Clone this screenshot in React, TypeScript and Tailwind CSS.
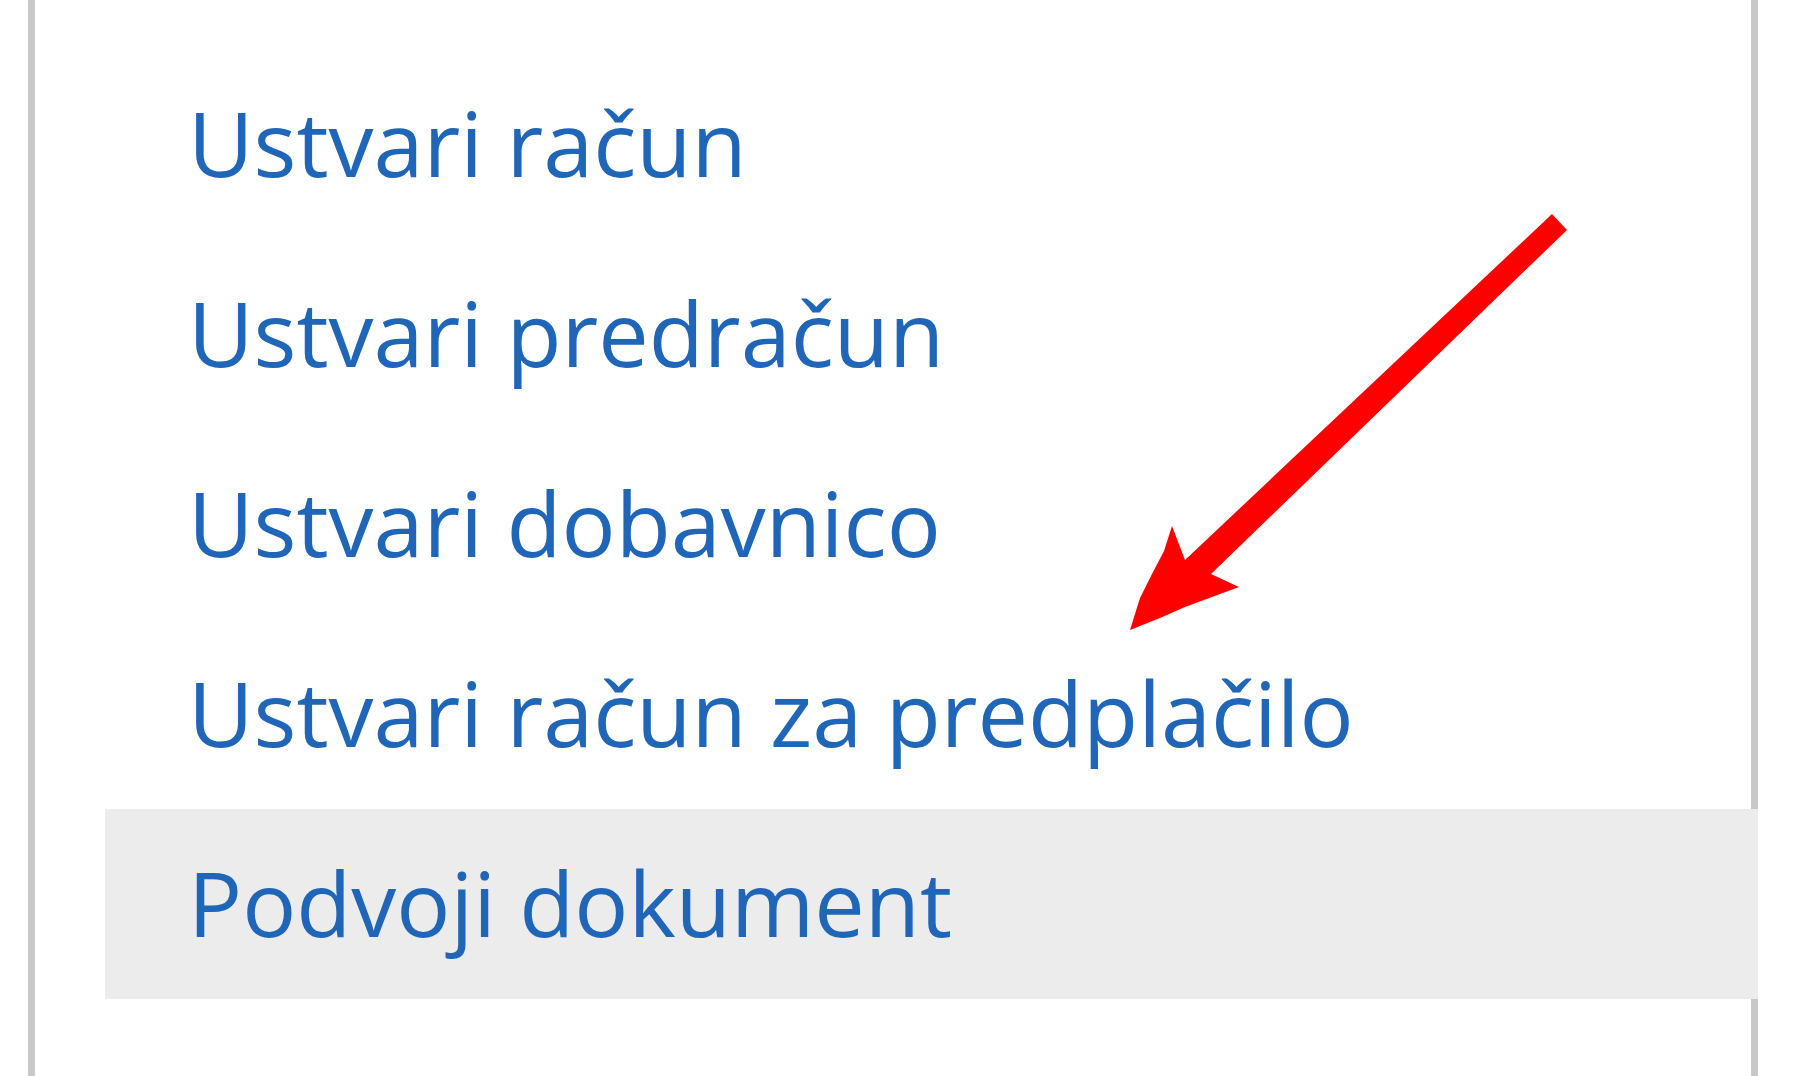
import React from 'react';

const items = [
  'Ustvari račun',
  'Ustvari predračun',
  'Ustvari dobavnico',
  'Ustvari račun za predplačilo',
  'Podvoji dokument',
];

function ArrowMark() {
  return (
    <svg className="pointer-events-none absolute left-0 top-0" width="1800" height="1076" viewBox="0 0 1800 1076">
      <polygon
        fill="#ff0000"
        points="1130,630 1140,598 1153,572 1164,551 1172,526 1185,560 1552,214 1567,230 1211,574 1239,587 1212,597 1185,607 1160,618"
      />
    </svg>
  );
}

export default function App() {
  const active = 4;

  return (
    <div className="relative h-[1076px] w-full overflow-hidden bg-white" style={{ fontFamily: '"Open Sans", "Noto Sans", sans-serif' }}>
      <div className="ml-[28px] h-full w-[1730px] border-x-[7px] border-[#c8c8c8] pt-[49px]">
        <ul className="ml-[70px] mr-[-7px]">
          {items.map((label, i) => (
            <li
              key={label}
              className={
                'flex h-[190px] items-center pb-[4px] pl-[83px] text-[90px] leading-none text-[#2066b8] ' +
                (i === active ? 'bg-[#ececec]' : '')
              }
            >
              {label}
            </li>
          ))}
        </ul>
      </div>
      <ArrowMark />
    </div>
  );
}
